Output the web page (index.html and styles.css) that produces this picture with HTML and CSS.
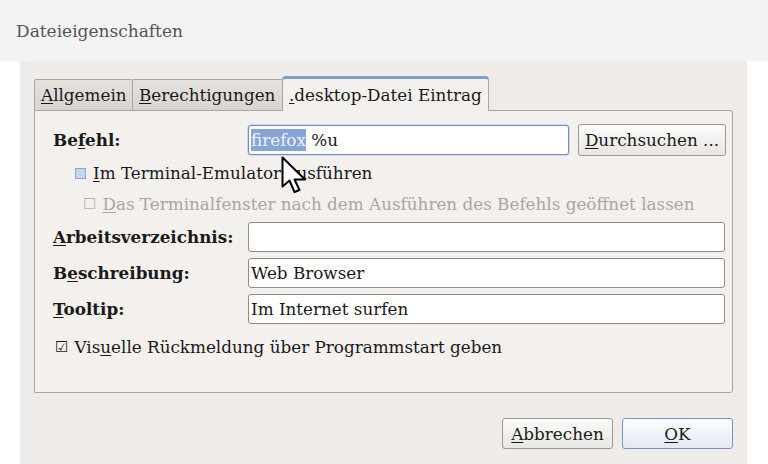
FILE: index.html
```html
<!DOCTYPE html>
<html lang="de">
<head>
<meta charset="utf-8">
<title>Dateieigenschaften</title>
<link rel="stylesheet" href="styles.css">
</head>
<body>
<div class="header"><span class="title">Dateieigenschaften</span></div>
<div class="main">
  <div class="panel">
    <div class="tabs">
      <div class="tab"><u>A</u>llgemein</div>
      <div class="tab"><u>B</u>erechtigungen</div>
      <div class="tab active"><u>.</u>desktop-Datei Eintrag</div>
    </div>
    <div class="nb-body">
      <div class="row row-cmd">
        <label class="lbl">Be<u>f</u>ehl:</label>
        <div class="entry focus"><span class="sel">firefox</span> %u</div>
        <button class="btn browse"><u>D</u>urchsuchen ...</button>
      </div>
      <div class="row chk chk1">
        <span class="box hover"></span><span><u>I</u>m Terminal-Emulator ausführen</span>
      </div>
      <div class="row chk chk2 disabled">
        <span class="glyph">☐</span><span><u>D</u>as Terminalfenster nach dem Ausführen des Befehls geöffnet lassen</span>
      </div>
      <div class="row field first">
        <label class="lbl"><u>A</u>rbeitsverzeichnis:</label>
        <div class="entry wide"></div>
      </div>
      <div class="row field">
        <label class="lbl">B<u>e</u>schreibung:</label>
        <div class="entry wide">Web Browser</div>
      </div>
      <div class="row field">
        <label class="lbl"><u>T</u>ooltip:</label>
        <div class="entry wide">Im Internet surfen</div>
      </div>
      <div class="row chk chk3">
        <span class="glyph">☑</span><span>Vis<u>u</u>elle Rückmeldung über Programmstart geben</span>
      </div>
    </div>
    <div class="actions">
      <button class="btn act"><u>A</u>bbrechen</button>
      <button class="btn act ok"><u>O</u>K</button>
    </div>
  </div>
</div>
<svg class="cursor" width="30" height="40" viewBox="0 0 30 40">
  <polygon points="1.5,1.5 1.5,30.5 8.5,24.5 13.5,36 18.5,34 13.5,23.5 24,23.5" fill="#fff" stroke="#000" stroke-width="2" stroke-linejoin="round"/>
</svg>
</body>
</html>
```
FILE: styles.css
```css
html, body {
  margin: 0;
  padding: 0;
}
body {
  width: 768px;
  height: 464px;
  overflow: hidden;
  background: #ffffff;
  font-family: "DejaVu Serif", "DejaVu Sans", sans-serif;
  font-size: 16.8px;
  color: #1a1a1a;
  position: relative;
}
u { text-decoration: underline; text-underline-offset: 2px; }
.header {
  height: 61px;
  background: #f3f3f3;
  display: flex;
  align-items: center;
  padding-left: 16px;
}
.title {
  font-size: 17px;
  color: #555555;
}
.main {
  display: flex;
  padding-left: 20px;
}
.panel {
  width: 727px;
  height: 403px;
  box-sizing: border-box;
  background: #efebe8;
  border-left: 12px solid #ebebea;
  border-right: 1px solid #e6e6e6;
  padding: 15px 13px 0 2px;
}
.tabs {
  display: flex;
  align-items: flex-end;
  height: 34px;
}
.tab {
  height: 31px;
  box-sizing: border-box;
  border: 1px solid #a9a6a1;
  border-bottom: none;
  background: linear-gradient(#e4e1dd, #d9d6d1);
  display: flex;
  align-items: center;
  padding: 0 6px;
  margin-right: -1px;
  border-radius: 2px 2px 0 0;
  position: relative;
  white-space: nowrap;
}
.tab:nth-child(1) { width: 99px; }
.tab:nth-child(2) { width: 151px; }
.tab.active {
  width: 207px;
  height: 35px;
  margin-bottom: -1px;
  background: #f3f0ed;
  border-top: 3px solid #7d9ed0;
  border-radius: 4px 4px 0 0;
  z-index: 1;
}
.nb-body {
  height: 283px;
  box-sizing: border-box;
  border: 1px solid #a9a5a0;
  border-radius: 0 3px 3px 0;
  background: #f3f0ed;
  padding: 13px 7px 0 18px;
}
.row {
  display: flex;
  align-items: center;
  white-space: nowrap;
}
.lbl {
  width: 195px;
  font-weight: bold;
  flex: none;
}
.entry {
  box-sizing: border-box;
  height: 30px;
  border: 1px solid #8f8c88;
  border-radius: 3px;
  background: #ffffff;
  display: flex;
  align-items: center;
  padding-left: 2px;
  white-space: pre;
}
.entry.focus {
  width: 321px;
  border-color: #6f8fc2;
  box-shadow: 0 0 0 0.5px #a9c0e3;
}
.entry.wide { flex: 1; }
.sel {
  background: #86a5d6;
  color: #edf2fa;
  padding: 1px 0;
}
.row-cmd { height: 32px; }
.btn {
  font-family: "DejaVu Serif", "DejaVu Sans", sans-serif;
  font-size: 16.8px;
  color: #1a1a1a;
  border: 1px solid #9c9995;
  border-radius: 3px;
  background: linear-gradient(#fbfbfa, #e8e6e2);
  box-sizing: border-box;
  padding: 0;
  white-space: nowrap;
}
.browse {
  width: 148px;
  height: 32px;
  margin-left: 9px;
  margin-right: -1px;
}
.chk { height: 22px; }
.chk1 { margin-top: 6px; padding-left: 22px; }
.chk2 { margin-top: 9px; padding-left: 30px; color: #a9a7a4; }
.chk3 { margin-top: 12px; padding-left: 2px; }
.box {
  width: 9px;
  height: 9px;
  border: 1px solid #8ea8cc;
  background: #c5d7ee;
  margin-right: 7px;
  flex: none;
}
.glyph {
  font-family: "DejaVu Sans", sans-serif;
  font-size: 15px;
  margin-right: 6px;
}
.disabled .glyph { color: #b4b2af; }
.field { margin-top: 6px; }
.field.first { margin-top: 7px; }
.actions {
  display: flex;
  justify-content: flex-end;
  gap: 9px;
  margin-top: 25px;
}
.act {
  width: 111px;
  height: 31px;
}
.ok {
  border-color: #7893c0;
  background: linear-gradient(#fbfcfe, #e3e9f2);
}
.cursor {
  position: absolute;
  left: 281px;
  top: 156px;
}
```
